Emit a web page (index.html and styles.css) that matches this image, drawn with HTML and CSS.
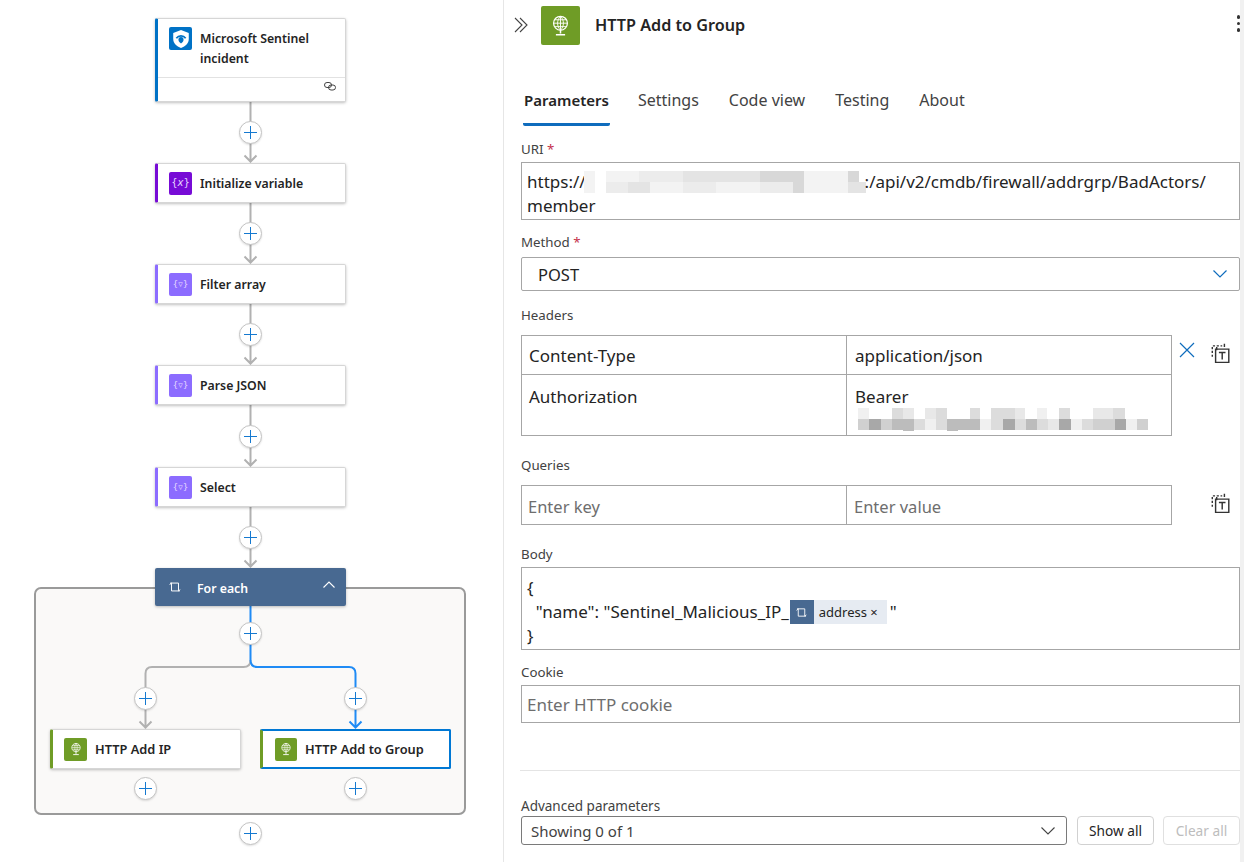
FILE: index.html
```html
<!DOCTYPE html>
<html lang="en">
<head>
  <meta charset="UTF-8">
  <title>HTTP Add to Group - Designer</title>
  <link rel="stylesheet" href="styles.css">
</head>
<body>
  <svg class="sprites" width="0" height="0">
    <symbol id="globe" viewBox="0 0 20 20">
      <circle cx="10" cy="8" r="6" fill="none" stroke="#fff" stroke-width="1.1"/>
      <path d="M4 8h12M5 5h10M5 11h10M10 2v12M10 2c-3.4 3.4-3.4 8.600 0 12M10 2c3.400 3.400 3.400 8.600 0 12" fill="none" stroke="#fff" stroke-width=".8"/>
      <path d="M10 14v3M6 18h8" fill="none" stroke="#fff" stroke-width="1.300"/>
    </symbol>
    <symbol id="loop" viewBox="0 0 16 16">
      <path d="M4 3.500v9h8M12 12.500v-9H4M2 5.500l2-2.500M12 12.500l2-1.500M4 3.500H2.500M12 12.500h1.500" fill="none" stroke="#fff" stroke-width="1.100"/>
    </symbol>
    <symbol id="tokens" viewBox="0 0 20 20">
      <path d="M3 13.500V3.500h9" fill="none" stroke="#333" stroke-width="1.300" stroke-dasharray="2 1.500"/>
      <path d="M6 6.500h12v12H6z" fill="#fff" stroke="#333" stroke-width="1.300"/>
      <path d="M9 9.500h6M12 9.500v6.500M7 4.500v3M14 1.500v3" fill="none" stroke="#333" stroke-width="1.300"/>
    </symbol>
  </svg>

  <div class="canvas">
    <div class="group-box"></div>

    <svg class="edges" width="503" height="862">
      <g class="edge">
        <path d="M250.500 102V162M244.500 155.500l6 6 6-6"/>
        <path d="M250.500 203V263M244.500 256.500l6 6 6-6"/>
        <path d="M250.500 304V364M244.500 357.500l6 6 6-6"/>
        <path d="M250.500 405V466M244.500 459.500l6 6 6-6"/>
        <path d="M250.500 507V567M244.500 560.500l6 6 6-6"/>
        <path d="M250.500 660q0 7-7 7H152q-6.500 0-6.500 6.500V728M139.500 721.500l6 6 6-6"/>
      </g>
      <g class="edge edge-active">
        <path d="M250.500 606V660q0 7 7 7H349q6.500 0 6.500 6.500V728M349.500 721.500l6 6 6-6"/>
      </g>
    </svg>

    <div class="node node-sentinel accent-blue n-sentinel">
      <div class="node-main">
        <span class="tile tile-blue">
          <svg width="20" height="20" viewBox="0 0 18 18">
            <path d="M9 1l7 2.500V9c0 4-3 6.500-7 8-4-1.500-7-4-7-8V3.500z" fill="#fff"/>
            <path d="M4.800 8.300a5.200 5.200 0 0 1 8.400 0" fill="none" stroke="#0072c6" stroke-width="1.500"/>
            <path d="M9 7.300a2.300 2.300 0 0 1 2.300 2.300c0 1.500-1.300 2.700-2.300 3.400-1-.7-2.300-1.900-2.300-3.400A2.300 2.300 0 0 1 9 7.300z" fill="#0072c6"/>
          </svg>
        </span>
        <span class="node-title">Microsoft Sentinel incident</span>
      </div>
      <div class="node-foot">
        <svg width="12" height="9" viewBox="0 0 12 9">
          <rect x=".5" y=".5" width="7" height="5" rx="2.500" fill="none" stroke="#444"/>
          <rect x="4.500" y="3" width="7" height="5" rx="2.500" fill="none" stroke="#444"/>
        </svg>
      </div>
    </div>

    <div class="node accent-purple n-init">
      <span class="tile tile-purple"><span class="brace-text">{<i>x</i>}</span></span>
      <span class="node-title">Initialize variable</span>
    </div>
    <div class="node accent-violet n-filter">
      <span class="tile tile-violet"><span class="brace-text brace-small">{▿}</span></span>
      <span class="node-title">Filter array</span>
    </div>
    <div class="node accent-violet n-parse">
      <span class="tile tile-violet"><span class="brace-text brace-small">{▿}</span></span>
      <span class="node-title">Parse JSON</span>
    </div>
    <div class="node accent-violet n-select">
      <span class="tile tile-violet"><span class="brace-text brace-small">{▿}</span></span>
      <span class="node-title">Select</span>
    </div>

    <div class="node-loop n-foreach">
      <svg width="14" height="14"><use href="#loop"/></svg>
      <span class="loop-title">For each</span>
      <svg class="loop-caret" width="12" height="7" viewBox="0 0 12 7"><path d="M.5 6.500l5.500-5.500 5.500 5.500" fill="none" stroke="#fff" stroke-width="1.100"/></svg>
    </div>

    <div class="node accent-green n-addip">
      <span class="tile tile-green"><svg width="14" height="14"><use href="#globe"/></svg></span>
      <span class="node-title node-title-http">HTTP Add IP</span>
    </div>
    <div class="node accent-green node-selected n-addgroup">
      <span class="tile tile-green"><svg width="14" height="14"><use href="#globe"/></svg></span>
      <span class="node-title node-title-http">HTTP Add to Group</span>
    </div>

    <span class="add a1"></span>
    <span class="add a2"></span>
    <span class="add a3"></span>
    <span class="add a4"></span>
    <span class="add a5"></span>
    <span class="add a6"></span>
    <span class="add a7"></span>
    <span class="add a8"></span>
    <span class="add a9"></span>
    <span class="add a10"></span>
    <span class="add a11"></span>
  </div>

  <div class="panel">
    <div class="panel-head">
      <svg class="collapse" width="14" height="16" viewBox="0 0 14 16"><path d="M1 1l7 7-7 7M6 1l7 7-7 7" fill="none" stroke="#444" stroke-width="1.100"/></svg>
      <span class="head-tile"><svg width="23" height="23"><use href="#globe"/></svg></span>
      <h1>HTTP Add to Group</h1>
      <span class="kebab"><i></i><i></i><i></i></span>
    </div>

    <div class="tabs">
      <span class="tab tab-active">Parameters</span>
      <span class="tab">Settings</span>
      <span class="tab">Code view</span>
      <span class="tab">Testing</span>
      <span class="tab">About</span>
    </div>

    <div class="field f-uri">
      <label>URI <b>*</b></label>
      <div class="box box-uri">
        https://<svg class="blur-uri" width="282" height="22">
          <path fill="#f3f3f3" d="M0 0h11v22H0zM22 0h33v11H22zM66 11h33v11H66zM132 11h44v11h-44zM220 0h44v22h-44z"/>
          <path fill="#ececec" d="M22 11h22v11H22zM55 0h44v11H55zM99 11h33v11H99zM176 11h33v11h-33z"/>
          <path fill="#e4e4e4" d="M44 11h22v11H44zM99 0h33v11H99zM132 0h44v11h-44zM264 11h18v11h-18z"/>
          <path fill="#d8d8d8" d="M176 0h33v11h-33zM209 0h11v11h-11zM209 11h11v11h-11zM264 0h11v11h-11z"/>
        </svg>:/api/v2/cmdb/firewall/addrgrp/BadActors/<br>member
      </div>
    </div>

    <div class="field f-method">
      <label>Method <b>*</b></label>
      <div class="box box-select">
        POST
        <svg width="14" height="8" viewBox="0 0 14 8"><path d="M.5.500l6.500 6.500 6.500-6.500" fill="none" stroke="#0f6cbd" stroke-width="1.200"/></svg>
      </div>
    </div>

    <div class="field f-headers">
      <label>Headers</label>
      <div class="kv-row">
        <div class="kv">
          <div class="cell cell-top">Content-Type</div>
          <div class="cell cell-top">application/json</div>
          <div class="cell cell-tall">Authorization</div>
          <div class="cell cell-tall">Bearer
            <svg class="blur-token" width="295" height="23">
              <path fill="#f0f0f0" d="M3 0h11v11H3zM125 11h11v11h-11zM182 0h10v11h-10zM216 11h11v11h-11zM271 11h11v11h-11zM70 11h11v11H70z"/>
              <path fill="#e8e8e8" d="M48 0h11v11H48zM70 0h11v11H70zM160 0h10v11h-10zM238 0h20v11h-20zM193 11h11v11h-11z"/>
              <path fill="#dcdcdc" d="M37 0h11v11H37zM81 0h11v11H81zM115 0h10v11h-10zM136 0h24v11h-24zM204 0h11v11h-11zM258 0h12v11h-12zM59 11h11v11H59zM81 11h11v11H81zM136 11h12v11h-12zM160 11h11v11h-11zM182 11h11v11h-11zM227 11h11v11h-11z"/>
              <path fill="#d0d0d0" d="M3 11h11v11H3zM26 11h11v11H26zM238 11h22v11h-22zM282 11h11v11h-11z"/>
              <path fill="#bcbcbc" d="M37 11h11v11H37zM48 11h11v12H48zM92 11h11v12H92zM103 11h22v11h-22zM171 11h11v11h-11z"/>
              <path fill="#a8a8a8" d="M14 11h12v11H14zM148 11h12v11h-12zM204 11h12v11h-12zM260 11h11v11h-11z"/>
            </svg>
          </div>
        </div>
        <svg class="kv-x" width="16" height="16" viewBox="0 0 16 16"><path d="M1 1l14 14M15 1L1 15" fill="none" stroke="#0f6cbd" stroke-width="1.200"/></svg>
        <svg class="kv-tokens" width="22" height="22"><use href="#tokens"/></svg>
      </div>
    </div>

    <div class="field f-queries">
      <label>Queries</label>
      <div class="kv-row">
        <div class="kv">
          <div class="cell cell-top cell-hint">Enter key</div>
          <div class="cell cell-top cell-hint">Enter value</div>
        </div>
        <svg class="kv-tokens kv-tokens-alone" width="22" height="22"><use href="#tokens"/></svg>
      </div>
    </div>

    <div class="field f-body">
      <label>Body</label>
      <div class="box box-body">
        <div>{</div>
        <div class="body-line">&nbsp;&nbsp;"name": "Sentinel_Malicious_IP_<span class="token"><span class="token-icon"><svg width="13" height="13"><use href="#loop"/></svg></span><span class="token-text">address ×</span></span>"</div>
        <div>}</div>
      </div>
    </div>

    <div class="field f-cookie">
      <label>Cookie</label>
      <div class="box box-cookie">Enter HTTP cookie</div>
    </div>

    <hr class="rule">

    <div class="field f-advanced">
      <label>Advanced parameters</label>
      <div class="adv-row">
        <div class="adv-select">Showing 0 of 1
          <svg width="14" height="8" viewBox="0 0 14 8"><path d="M.5.500l6.500 6.500 6.500-6.500" fill="none" stroke="#444" stroke-width="1.100"/></svg>
        </div>
        <button class="btn">Show all</button>
        <button class="btn btn-off">Clear all</button>
      </div>
    </div>
  </div>

  <div class="scrollbar"></div>
</body>
</html>
```

FILE: styles.css
```css
* {
  box-sizing: border-box;
}

body {
  margin: 0;
  height: 862px;
  display: flex;
  overflow: hidden;
  background: #fff;
  color: #242424;
  font-family: "Noto Sans", "Open Sans", sans-serif;
}

.sprites {
  position: absolute;
}

/* canvas */
.canvas {
  position: relative;
  width: 503px;
  flex: none;
}

.edges {
  position: absolute;
  left: 0;
  top: 0;
}

.edge path {
  fill: none;
  stroke: #b1b1b1;
  stroke-width: 2;
}

.edge-active path {
  stroke: #1f8bf5;
}

.group-box {
  position: absolute;
  left: 34px;
  top: 587px;
  width: 432px;
  height: 228px;
  background: #faf9f8;
  border: 2px solid #9a9a9a;
  border-radius: 7px;
}

.node {
  position: absolute;
  width: 191px;
  height: 40px;
  display: flex;
  align-items: center;
  padding-left: 11px;
  background: #fff;
  border: 1px solid #d6d6d6;
  border-left-width: 3px;
  border-radius: 2px;
  box-shadow: 0 1px 3px rgba(0,0,0,0.25);
}

.accent-blue { border-left-color: #0072c6; }
.accent-purple { border-left-color: #770bd6; }
.accent-violet { border-left-color: #8c6cff; }
.accent-green { border-left-color: #6f9c26; }

.node-selected {
  border: 2px solid #0078d4;
  border-left: 3px solid #6f9c26;
  box-shadow: none;
  padding-left: 12px;
}

.node-sentinel {
  height: 84px;
  display: block;
  padding-left: 0;
}

.node-main {
  display: flex;
  align-items: flex-start;
  height: 59px;
  padding: 8px 0 0 11px;
  border-bottom: 1px solid #e2e2e2;
}

.node-foot {
  display: flex;
  justify-content: flex-end;
  padding: 4px 9px 0 0;
}

.tile {
  width: 23px;
  height: 23px;
  flex: none;
  display: flex;
  align-items: center;
  justify-content: center;
  border-radius: 2px;
  margin-right: 8px;
}

.tile-blue { background: #0072c6; }
.tile-purple { background: #770bd6; }
.tile-violet { background: #8c6cff; }
.tile-green { background: #6f9c26; }

.node-selected .tile {
  width: 22px;
}

.brace-text {
  color: #e4d6ff;
  font-size: 10px;
  line-height: 1;
  font-family: "DejaVu Sans", sans-serif;
}

.brace-small {
  font-size: 9px;
}

.node-title {
  padding-top: 1px;
  font-size: 12.3px;
  font-weight: 600;
  line-height: 20px;
  color: #242424;
}

.node-title-http {
  padding-top: 0;
  font-size: 12.800px;
}

.node-sentinel .node-title {
  padding-top: 0;
  margin-top: 2px;
  width: 125px;
}

.node-loop {
  position: absolute;
  width: 191px;
  height: 38px;
  display: flex;
  align-items: center;
  padding: 0 11px 0 13px;
  background: #486991;
  border-radius: 2px;
  box-shadow: 0 1px 3px rgba(0,0,0,0.25);
  color: #fff;
}

.loop-title {
  margin-left: 15px;
  padding-top: 2px;
  font-size: 12.3px;
  font-weight: 600;
}

.loop-caret {
  margin-left: auto;
  margin-bottom: 6px;
}

.n-sentinel { left: 155px; top: 18px; }
.n-init { left: 155px; top: 163px; }
.n-filter { left: 155px; top: 264px; }
.n-parse { left: 155px; top: 365px; }
.n-select { left: 155px; top: 467px; }
.n-foreach { left: 155px; top: 568px; }
.n-addip { left: 50px; top: 729px; }
.n-addgroup { left: 260px; top: 729px; }

.add {
  position: absolute;
  width: 23px;
  height: 23px;
  background: #fff;
  border: 1px solid #c4c4c4;
  border-radius: 50%;
  box-shadow: 0 1px 2px rgba(0,0,0,0.12);
}

.add::before,
.add::after {
  content: "";
  position: absolute;
  background: #1579d0;
}

.add::before {
  left: 4px;
  top: 10px;
  width: 13px;
  height: 1px;
}

.add::after {
  left: 10px;
  top: 4px;
  width: 1px;
  height: 13px;
}

.a1 { left: 239px; top: 121px; }
.a2 { left: 239px; top: 222px; }
.a3 { left: 239px; top: 323px; }
.a4 { left: 239px; top: 425px; }
.a5 { left: 239px; top: 526px; }
.a6 { left: 239px; top: 622px; }
.a7 { left: 134px; top: 687px; }
.a8 { left: 344px; top: 687px; }
.a9 { left: 134px; top: 777px; }
.a10 { left: 344px; top: 777px; }
.a11 { left: 239px; top: 822px; }

/* panel */
.panel {
  width: 737px;
  flex: none;
  padding-left: 17px;
  border-left: 1px solid #e6e6e6;
  font-size: 17px;
}

.panel-head {
  height: 44px;
  margin-top: 3px;
  display: flex;
  align-items: center;
  position: relative;
}

.collapse {
  margin-left: -7px;
  margin-right: 13px;
}

.head-tile {
  width: 39px;
  height: 39px;
  flex: none;
  display: flex;
  align-items: center;
  justify-content: center;
  background: #6f9c26;
  border-radius: 2px;
}

h1 {
  margin: 0 0 0 15px;
  font-size: 16.200px;
  font-weight: 600;
  color: #242424;
}

.kebab {
  position: absolute;
  right: 0;
  top: 12px;
  display: flex;
  flex-direction: column;
  gap: 3px;
}

.kebab i {
  width: 3.500px;
  height: 3.500px;
  border-radius: 50%;
  background: #333;
}

.tabs {
  display: flex;
  margin-top: 37px;
  height: 42px;
  padding-left: 2px;
}

.tab {
  margin-right: 28px;
  padding: 0 1px;
  height: 42px;
  line-height: 32px;
  font-size: 16px;
  color: #424242;
}

.tab-active {
  margin-right: 27px;
  font-size: 15px;
  font-weight: 600;
  color: #242424;
  border-bottom: 3px solid #0f6cbd;
  border-radius: 0 0 2px 2px;
}

.field label {
  display: block;
  height: 20px;
  line-height: 20px;
  font-size: 13.300px;
  color: #424242;
}

.field label b {
  color: #c4314b;
  font-weight: 400;
}

.box {
  border: 1px solid #a6a6a6;
  background: #fff;
  color: #242424;
}

.f-uri { margin-top: 13px; }
.f-method { margin-top: 12px; }
.f-headers { margin-top: 14px; }
.f-queries { margin-top: 19px; }
.f-body { margin-top: 19px; }
.f-cookie { margin-top: 12px; }
.f-advanced { margin-top: 25px; }

.f-uri label { margin-bottom: 3px; }
.f-method label { margin-bottom: 5px; }
.f-headers label,
.f-queries label { margin-bottom: 10px; }
.f-body label,
.f-cookie label { margin-bottom: 3px; }

.box-uri {
  height: 58px;
  padding: 7px 0 0 5px;
  line-height: 24px;
  white-space: nowrap;
  overflow: hidden;
}

.blur-uri {
  vertical-align: -5px;
  margin: 0 -1px 0 -2px;
}

.box-select {
  height: 34px;
  display: flex;
  align-items: center;
  justify-content: space-between;
  padding: 0 12px 0 16px;
  border-radius: 2px;
  font-size: 16.500px;
}

.kv-row {
  display: flex;
  align-items: flex-start;
}

.kv {
  width: 651px;
  display: grid;
  grid-template-columns: 325px 325px;
  border-top: 1px solid #a6a6a6;
  border-left: 1px solid #a6a6a6;
}

.cell {
  border-right: 1px solid #a6a6a6;
  border-bottom: 1px solid #a6a6a6;
  padding: 0 0 0 8px;
  line-height: 40px;
  color: #242424;
}

.cell:nth-child(odd) {
  padding-left: 7px;
}

.cell-top { height: 39px; }

.cell-tall {
  height: 61px;
  line-height: 44px;
  position: relative;
}

.cell.cell-hint {
  padding-left: 6px;
  font-size: 16.500px;
  line-height: 42px;
  color: #6e6e6e;
}

.cell.cell-hint + .cell-hint {
  padding-left: 7px;
}

.blur-token {
  position: absolute;
  left: 8px;
  top: 33px;
}

.kv-x {
  margin: 7px 0 0 7px;
}

.kv-tokens {
  margin: 7px 0 0 14px;
}

.kv-tokens-alone {
  margin-left: 37px;
}

.box-body {
  height: 83px;
  padding: 8px 0 0 5px;
  line-height: 24px;
  white-space: nowrap;
  overflow: hidden;
}

.body-line {
  display: flex;
  align-items: center;
  white-space: pre;
}

.token {
  display: inline-flex;
  align-items: stretch;
  height: 24px;
  margin-left: 1px;
  margin-right: 3px;
}

.token-icon {
  width: 24px;
  display: flex;
  align-items: center;
  justify-content: center;
  background: #486991;
}

.token-text {
  width: 73px;
  padding-left: 5px;
  line-height: 25px;
  font-size: 13px;
  background: #e6ebf2;
}

.box-cookie {
  height: 38px;
  padding-left: 5px;
  line-height: 37px;
  color: #6e6e6e;
}

.rule {
  height: 1px;
  margin: 47px 0 0 -1px;
  border: 0;
  background: #e4e4e4;
}

.adv-row {
  display: flex;
  gap: 9px;
  margin-top: 0;
}

.f-advanced label {
  font-size: 13.500px;
  line-height: 21px;
}

.adv-select {
  width: 546px;
  height: 29px;
  margin-right: 1px;
  display: flex;
  align-items: center;
  justify-content: space-between;
  padding: 0 11px 0 9px;
  border: 1px solid #7a7a7a;
  border-radius: 3px;
  font-size: 15px;
  color: #424242;
}

.btn {
  width: 77px;
  height: 29px;
  padding: 0;
  background: #fff;
  border: 1px solid #d1d1d1;
  border-radius: 4px;
  font-family: inherit;
  font-size: 13.700px;
  color: #242424;
}

.btn-off {
  color: #bdbdbd;
  border-color: #e0e0e0;
}

.scrollbar {
  width: 4px;
  flex: none;
  background: #f1f1f1;
}
```
